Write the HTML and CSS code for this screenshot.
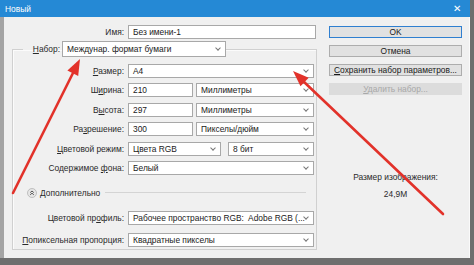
FILE: index.html
```html
<!DOCTYPE html>
<html lang="ru">
<head>
  <meta charset="UTF-8" />
  <title>Новый</title>
  <link rel="stylesheet" href="styles.css">
</head>
<body>

<div class="window">
  <div class="titlebar">
    <span class="title">Новый</span>
    <span class="close">✕</span>
  </div>

  <div class="frame">
    <div class="main">
      <div class="row name-row">
        <label>Имя:</label>
        <div class="field">Без имени-1</div>
      </div>

      <fieldset class="group">
        <legend>
          <label><u>Н</u>абор:</label>
          <div class="field select preset">Междунар. формат бумаги<i class="chev"></i></div>
        </legend>

        <div class="rows">
          <div class="row">
            <label><u>Р</u>азмер:</label>
            <div class="field select">A4<i class="chev"></i></div>
          </div>
          <div class="row">
            <label>Ш<u>и</u>рина:</label>
            <div class="field num">210</div>
            <div class="field select">Миллиметры<i class="chev"></i></div>
          </div>
          <div class="row">
            <label>В<u>ы</u>сота:</label>
            <div class="field num">297</div>
            <div class="field select">Миллиметры<i class="chev"></i></div>
          </div>
          <div class="row">
            <label>Ра<u>з</u>решение:</label>
            <div class="field num">300</div>
            <div class="field select">Пикселы/дюйм<i class="chev"></i></div>
          </div>
          <div class="row">
            <label><u>Ц</u>ветовой режим:</label>
            <div class="field select mode">Цвета RGB<i class="chev"></i></div>
            <div class="field select">8 бит<i class="chev"></i></div>
          </div>
          <div class="row">
            <label>Содержимое <u>ф</u>она:</label>
            <div class="field select">Белый<i class="chev"></i></div>
          </div>
        </div>

        <div class="advanced">
          <span class="toggle">
            <svg width="10" height="10" viewBox="0 0 10 10">
              <circle cx="5" cy="5" r="4.5" fill="#e6e6e6" stroke="#b4b4b4" stroke-width="0.8"/>
              <polyline points="3.2,4.6 5,3 6.8,4.6" fill="none" stroke="#444" stroke-width="0.9"/>
              <polyline points="3.2,6.8 5,5.2 6.8,6.8" fill="none" stroke="#444" stroke-width="0.9"/>
            </svg>
          </span>
          <span class="adv-text">Дополнительно</span>
          <span class="adv-line"></span>
        </div>

        <div class="rows extra">
          <div class="row">
            <label>Цветовой пр<u>о</u>филь:</label>
            <div class="field select">Рабочее пространство RGB:&nbsp; Adobe RGB (...<i class="chev"></i></div>
          </div>
          <div class="row">
            <label><u>П</u>опиксельная пропорция:</label>
            <div class="field select">Квадратные пикселы<i class="chev"></i></div>
          </div>
        </div>
      </fieldset>
    </div>

    <div class="side">
      <button class="btn default">OK</button>
      <button class="btn">Отмена</button>
      <button class="btn"><u>С</u>охранить набор параметров...</button>
      <button class="btn" disabled><u>У</u>далить набор...</button>

      <div class="size-info">
        <div>Размер изображения:</div>
        <div class="size-value">24,9M</div>
      </div>
    </div>
  </div>

  <!-- red annotation arrows over the dialog -->
  <svg class="arrows" width="474" height="265" viewBox="0 0 474 265">
    <line x1="13" y1="193" x2="74" y2="71" stroke="#e2322a" stroke-width="2.6" stroke-linecap="round"/>
    <polygon points="80,59 78.2,76 67.4,70.6" fill="#e2322a"/>
    <line x1="443" y1="214" x2="303" y2="81" stroke="#e2322a" stroke-width="2.6" stroke-linecap="round"/>
    <polygon points="293,71 308.7,77.7 300.5,86.3" fill="#e2322a"/>
  </svg>
</div>

</body>
</html>
```

FILE: styles.css
```css
body {
  margin: 0;
  background: #6e6e6e;
  font-family: "Liberation Sans", Arial, sans-serif;
  font-size: 8.4px;
  color: #1a1a1a;
}
.window {
  position: relative;
  width: 470px;
  height: 258px;
  background: #f0f0f0;
}
.titlebar {
  height: 17px;
  background: #2589d5;
  color: white;
  display: flex;
  align-items: center;
  justify-content: space-between;
  padding: 0 9px 0 5px;
}
.close {
  font-size: 10px;
}
.frame {
  display: flex;
  height: 241px;
  border-left: 4px solid #a4a4a4;
  border-right: 1px solid #fafafa;
}
.main {
  width: 312px;
}
.row {
  display: flex;
  align-items: center;
  height: 14px;
}
.row label {
  flex: none;
  text-align: right;
  color: #2a2a2a;
  margin-right: 4px;
}
.name-row {
  margin-top: 8px;
}
.name-row label {
  width: 120px;
}
.field {
  position: relative;
  box-sizing: border-box;
  height: 14px;
  line-height: 12px;
  background: white;
  border: 1px solid #a8a8a8;
  padding-left: 4px;
  white-space: nowrap;
  overflow: hidden;
  min-width: 0;
}
.name-row .field {
  width: 190px;
}
.chev {
  position: absolute;
  right: 5px;
  top: 3px;
  width: 3px;
  height: 3px;
  border-right: 1px solid #777;
  border-bottom: 1px solid #777;
  transform: rotate(45deg);
}
.group {
  margin: 2px 0 0 8px;
  padding: 7px 2px 1.5px 0;
  width: 301px;
  min-width: 0;
  border: 1px solid #d0d0d0;
  box-shadow: inset 1px 1px 0 #fbfbfb;
}
.group legend {
  display: flex;
  align-items: center;
  margin-left: 10px;
  padding: 0;
}
.group legend label {
  width: 37px;
  text-align: right;
  margin-right: 2px;
  color: #2a2a2a;
}
.preset {
  width: 164px;
  height: 16px;
  line-height: 14px;
}
.preset .chev {
  top: 4px;
}
.rows {
  display: flex;
  flex-direction: column;
  gap: 5.4px;
}
.rows .row label {
  width: 111px;
}
.rows .field {
  flex: 1;
}
.rows .num {
  flex: none;
  width: 65px;
  margin-right: 3px;
}
.rows .mode {
  flex: none;
  width: 93px;
  margin-right: 7px;
}
.advanced {
  display: flex;
  align-items: center;
  height: 10px;
  margin: 13px 8px 0 14px;
  color: #2a2a2a;
}
.toggle {
  display: flex;
  margin-right: 3px;
}
.adv-line {
  flex: 1;
  height: 1px;
  background: #d4d4d4;
  margin-left: 5px;
}
.extra {
  margin-top: 13.5px;
  gap: 8px;
}
.side {
  width: 133px;
  margin-left: 13px;
  padding-top: 9px;
  display: flex;
  flex-direction: column;
  gap: 7px;
}
.btn {
  height: 12px;
  padding: 0;
  font: inherit;
  line-height: 10px;
  white-space: nowrap;
  color: #1a1a1a;
  background: #e1e1e1;
  border: 1px solid #adadad;
}
.btn.default {
  border-color: #2f7fd0;
}
.btn:disabled {
  color: #a8a8a8;
  background: #dcdcdc;
  border-color: #dcdcdc;
}
.size-info {
  margin-top: 67px;
  text-align: center;
  color: #2a2a2a;
  line-height: 17px;
}
.arrows {
  position: absolute;
  left: 0;
  top: 0;
  pointer-events: none;
}
```
